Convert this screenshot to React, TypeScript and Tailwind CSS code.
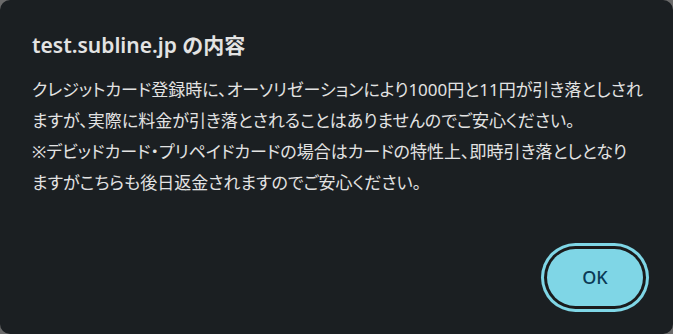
// Chrome-style dark alert dialog: "test.subline.jp の内容"
const lines = [
  "クレジットカード登録時に、オーソリゼーションにより1000円と11円が引き落としされ",
  "ますが、実際に料金が引き落とされることはありませんのでご安心ください。",
  "※デビッドカード・プリペイドカードの場合はカードの特性上、即時引き落としとなり",
  "ますがこちらも後日返金されますのでご安心ください。",
];

export default function App() {
  return (
    <div className="h-[334px] w-[673px] bg-[#6a6a6a]">
      <div
        className="flex h-full w-full flex-col rounded-[10px] bg-[#1b1f22] pl-[32px] pr-[30px] pt-[31px] pb-[28px] text-[#e3e3e3]"
        style={{ fontFamily: '"Noto Sans", "Noto Sans CJK JP", sans-serif' }}
      >
        <h1 className="text-[21px] font-semibold leading-[28px]">test.subline.jp の内容</h1>
        <div className="mt-[15px] text-[17px] leading-[31px] [font-feature-settings:'palt']">
          {lines.map((l) => (
            <p key={l} className="whitespace-nowrap">
              {l}
            </p>
          ))}
        </div>
        <div className="mt-auto flex justify-end">
          <button
            type="button"
            className="h-[57px] w-[96px] rounded-full bg-[#7fd6e6] text-[18px] font-medium text-[#0b3a56] ring-[3px] ring-[#7fd6e6] ring-offset-[3px] ring-offset-[#1a1b1c]"
          >
            OK
          </button>
        </div>
      </div>
    </div>
  );
}
